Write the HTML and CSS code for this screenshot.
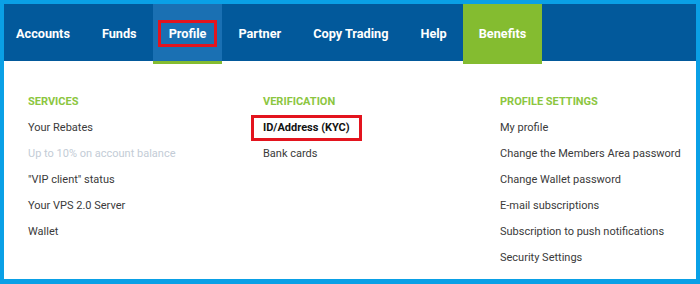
FILE: index.html
```html
<!DOCTYPE html>
<html lang="en">
<head>
  <meta charset="UTF-8">
  <title>Profile menu</title>
  <link rel="stylesheet" href="styles.css">
</head>
<body>
  <div class="frame">
    <!-- TOP MENU -->
    <nav class="menu">
      <a href="#" class="menu-item first">Accounts</a>
      <a href="#" class="menu-item">Funds</a>
      <a href="#" class="menu-item active"><span class="mark">Profile</span></a>
      <a href="#" class="menu-item">Partner</a>
      <a href="#" class="menu-item">Copy Trading</a>
      <a href="#" class="menu-item">Help</a>
      <a href="#" class="menu-item benefits">Benefits</a>
    </nav>

    <!-- DROPDOWN -->
    <div class="dropdown">
      <div class="col">
        <h3>Services</h3>
        <a href="#">Your Rebates</a>
        <span class="disabled">Up to 10% on account balance</span>
        <a href="#">"VIP client" status</a>
        <a href="#">Your VPS 2.0 Server</a>
        <a href="#">Wallet</a>
      </div>
      <div class="col">
        <h3>Verification</h3>
        <a href="#" class="current"><span class="mark">ID/Address (KYC)</span></a>
        <a href="#">Bank cards</a>
      </div>
      <div class="col">
        <h3>Profile settings</h3>
        <a href="#">My profile</a>
        <a href="#">Change the Members Area password</a>
        <a href="#">Change Wallet password</a>
        <a href="#">E-mail subscriptions</a>
        <a href="#">Subscription to push notifications</a>
        <a href="#">Security Settings</a>
      </div>
    </div>
  </div>
</body>
</html>
```

FILE: styles.css
```css
body {
  margin: 0;
  padding: 0;
  font-family: 'Roboto', 'Liberation Sans', sans-serif;
  background-color: #0aa0e6;
}

.frame {
  width: 692px;
  height: 275px;
  margin: 4px 4px 5px 4px;
  background-color: #ffffff;
}

/* menu superior */
.menu {
  display: flex;
  height: 57px;
  background-color: #02599b;
}

.menu-item {
  display: flex;
  align-items: center;
  box-sizing: border-box;
  height: 60px;
  padding: 0 16px;
  padding-top: 1px;
  border-bottom: 3px solid transparent;
  color: #ffffff;
  font-size: 12.7px;
  font-weight: bold;
  text-decoration: none;
}

.menu-item.first {
  padding-left: 12px;
}

.menu-item.active {
  background-color: #1a70b3;
  border-bottom-color: #84bc30;
}

.menu-item.benefits {
  background-color: #84bc30;
  border-bottom-color: #84bc30;
}

.mark {
  border: 3px solid #e3141e;
}

.menu-item .mark {
  margin: 0 -11px;
  padding: 0 8px;
  line-height: 21px;
}

/* dropdown */
.dropdown {
  display: grid;
  grid-template-columns: 235px 237px 1fr;
  padding: 28px 0 0 24px;
}

.col {
  display: flex;
  flex-direction: column;
  align-items: flex-start;
}

.col h3 {
  margin: 0;
  height: 26px;
  line-height: 26px;
  font-size: 11px;
  font-weight: bold;
  text-transform: uppercase;
  color: #8cc63f;
}

.col a,
.col .disabled {
  height: 26px;
  line-height: 26px;
  font-size: 11px;
  color: #3a3a3a;
  text-decoration: none;
  white-space: nowrap;
}

.col .disabled {
  color: #c3ccd6;
}

.col a.current {
  font-weight: bold;
  color: #111111;
}

.col a.current .mark {
  display: inline-block;
  margin-left: -12px;
  padding: 0 9px;
  line-height: 20px;
}
```
